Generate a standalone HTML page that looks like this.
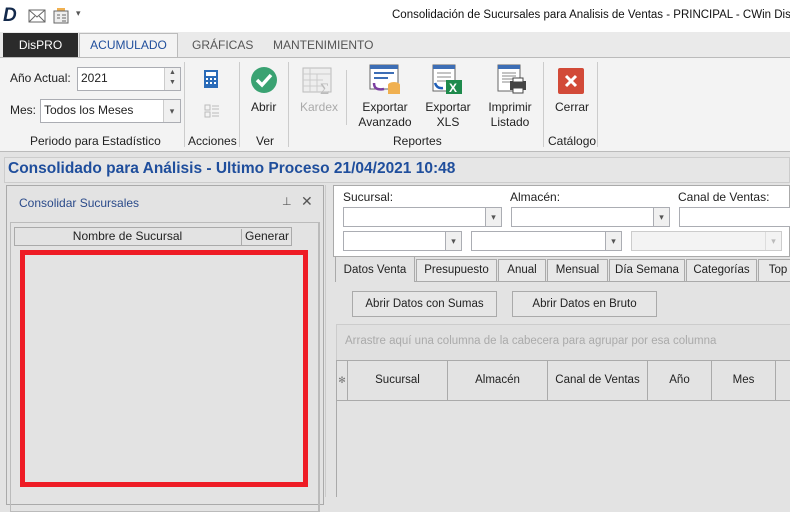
<!DOCTYPE html>
<html><head><meta charset="utf-8"><style>
*{box-sizing:border-box;margin:0;padding:0}
body{width:790px;height:497px;overflow:hidden;background:#e3e3e3;font-family:"Segoe UI","Liberation Sans",sans-serif;font-size:12px;color:#222;position:relative}
.a{position:absolute}
.t{white-space:nowrap}
.cb{position:absolute;background:#fff;border:1px solid #abadb3;height:20px}
.cb .ar{position:absolute;right:0;top:0;width:16px;height:18px;border-left:1px solid #abadb3;background:#f0f0f0;font-size:9px;text-align:center;line-height:18px;color:#555}
.tab{position:absolute;top:259px;height:23px;border:1px solid #aaa;background:#e8e8e8;text-align:center;line-height:21px;font-size:11.5px}
.btn{position:absolute;top:291px;height:26px;border:1px solid #aaa;background:#e6e6e6;text-align:center;line-height:24px;font-size:11.5px}
.gh{position:absolute;top:361px;height:39px;border-right:1px solid #aaa;text-align:center;line-height:38px;font-size:11.5px}
.rl{position:absolute;font-size:12px;text-align:center;color:#222;line-height:15px}
</style></head><body>
<div class="a" style="left:0;top:0;width:790px;height:32px;background:#fff"></div>
<div class="a t" style="left:3px;top:5px;font:bold italic 19px 'Liberation Sans',sans-serif;color:#13294b">D</div>
<svg class="a" style="left:28px;top:9px" width="18" height="14"><rect x="1" y="1" width="16" height="12" fill="#fff" stroke="#666"/><path d="M1 1L9 8L17 1M1 13L7 7M17 13L11 7" fill="none" stroke="#666"/></svg>
<svg class="a" style="left:52px;top:6px" width="18" height="18"><rect x="5" y="2" width="8" height="5" fill="#f0b050"/><rect x="2" y="5" width="14" height="12" fill="#eee" stroke="#666"/><path d="M5 9h3M5 12h3M10 9h4M10 12h4M10 15h4" stroke="#666"/></svg>
<div class="a t" style="left:76px;top:8px;font-size:9px;color:#555">▾</div>
<div class="a t" style="left:392px;top:9px;font-size:11.5px;color:#111">Consolidación de Sucursales para Analisis de Ventas - PRINCIPAL - CWin Dis</div>
<div class="a" style="left:0;top:32px;width:790px;height:25px;background:#eaeaea"></div>
<div class="a t" style="left:3px;top:33px;width:75px;height:24px;background:#2b2b2b;color:#fff;text-align:center;line-height:24px;font-size:12px">DisPRO</div>
<div class="a t" style="left:79px;top:33px;width:99px;height:25px;background:#f3f3f3;border:1px solid #bbb;border-bottom:none;color:#1f4e9c;text-align:center;line-height:23px;font-size:12px">ACUMULADO</div>
<div class="a t" style="left:192px;top:38px;color:#555">GRÁFICAS</div>
<div class="a t" style="left:273px;top:38px;color:#555">MANTENIMIENTO</div>
<div class="a" style="left:0;top:57px;width:790px;height:95px;background:#f3f3f3;border-top:1px solid #bbb;border-bottom:1px solid #bbb"></div>
<div class="a t" style="left:10px;top:71px">Año Actual:</div>
<div class="a" style="left:77px;top:67px;width:104px;height:24px;background:#fff;border:1px solid #abadb3"><span class="a" style="left:3px;top:3px">2021</span><div class="a" style="right:0;top:0;width:16px;height:22px;border-left:1px solid #ccc;background:#f0f0f0;font-size:7px;line-height:10px;text-align:center;color:#555">▲<br>▼</div></div>
<div class="a t" style="left:10px;top:103px">Mes:</div>
<div class="a" style="left:40px;top:99px;width:141px;height:24px;background:#fff;border:1px solid #abadb3"><span class="a" style="left:3px;top:3px">Todos los Meses</span><div class="a" style="right:0;top:0;width:17px;height:22px;border-left:1px solid #ccc;background:#f0f0f0;font-size:9px;line-height:22px;text-align:center;color:#555">▾</div></div>
<div class="a t" style="left:30px;top:134px">Periodo para Estadístico</div>
<div class="a" style="left:184px;top:62px;width:1px;height:85px;background:#ccc"></div>
<svg class="a" style="left:204px;top:70px" width="14" height="18"><rect x="0" y="0" width="14" height="18" fill="#2a6bb8"/><rect x="2" y="2" width="10" height="4" fill="#fff"/><path d="M2 8h2v2H2zM6 8h2v2H6zM10 8h2v2h-2zM2 12h2v2H2zM6 12h2v2H6zM10 12h2v2h-2z" fill="#fff"/></svg>
<svg class="a" style="left:204px;top:103px" width="16" height="16"><path d="M1 2h5v5H1zM1 9h5v5H1zM8 3h7M8 6h7M8 10h7M8 13h7" fill="none" stroke="#bbb"/></svg>
<div class="a t" style="left:188px;top:134px">Acciones</div>
<div class="a" style="left:239px;top:62px;width:1px;height:85px;background:#ccc"></div>
<svg class="a" style="left:250px;top:66px" width="28" height="28"><circle cx="14" cy="14" r="13" fill="#3aa272"/><path d="M7 14l5 5 9-10" fill="none" stroke="#fff" stroke-width="3.5"/></svg>
<div class="a t" style="left:251px;top:100px">Abrir</div>
<div class="a t" style="left:256px;top:134px">Ver</div>
<div class="a" style="left:288px;top:62px;width:1px;height:85px;background:#ccc"></div>
<svg class="a" style="left:302px;top:66px" width="32" height="30"><rect x="1" y="2" width="28" height="24" fill="#eee" stroke="#bbb"/><path d="M1 8h28M1 14h20M1 20h20M8 2v24M15 8v18" stroke="#ccc"/><text x="18" y="28" font-size="16" fill="#bbb" font-family="Liberation Serif">Σ</text></svg>
<div class="a t" style="left:300px;top:100px;color:#aaa">Kardex</div>
<div class="a" style="left:346px;top:70px;width:1px;height:55px;background:#ccc"></div>
<svg class="a" style="left:368px;top:63px" width="34" height="32"><rect x="2" y="2" width="28" height="24" fill="#fff" stroke="#666"/><rect x="2" y="2" width="28" height="4" fill="#3d6eb5"/><path d="M6 10h20M6 15h14" stroke="#3d6eb5" stroke-width="2"/><path d="M6 20q0 8 10 6" fill="none" stroke="#7b3fa0" stroke-width="2.5"/><ellipse cx="26" cy="22" rx="6" ry="3" fill="#f0b050"/><rect x="20" y="22" width="12" height="9" fill="#f0b050"/></svg>
<div class="rl t" style="left:350px;top:100px;width:70px">Exportar<br>Avanzado</div>
<svg class="a" style="left:431px;top:63px" width="34" height="32"><rect x="2" y="2" width="22" height="26" fill="#fff" stroke="#666"/><rect x="2" y="2" width="22" height="4" fill="#3d6eb5"/><path d="M6 10h14M6 14h14M6 18h10" stroke="#888"/><path d="M4 20q2 6 8 5" fill="none" stroke="#1f5fb8" stroke-width="2.5"/><rect x="15" y="17" width="16" height="14" fill="#1e8a4c"/><text x="18" y="29" font-size="12" font-weight="bold" fill="#fff" font-family="Liberation Sans">X</text></svg>
<div class="rl t" style="left:418px;top:100px;width:60px">Exportar<br>XLS</div>
<svg class="a" style="left:496px;top:63px" width="32" height="32"><rect x="2" y="2" width="22" height="26" fill="#fff" stroke="#666"/><rect x="2" y="2" width="22" height="4" fill="#3d6eb5"/><path d="M6 10h14M6 13h14M6 16h14M6 19h10" stroke="#888"/><rect x="14" y="18" width="16" height="9" fill="#444"/><rect x="17" y="15" width="10" height="4" fill="#fff" stroke="#444"/><rect x="17" y="25" width="10" height="5" fill="#fff" stroke="#444"/></svg>
<div class="rl t" style="left:480px;top:100px;width:60px">Imprimir<br>Listado</div>
<div class="a t" style="left:393px;top:134px">Reportes</div>
<div class="a" style="left:543px;top:62px;width:1px;height:85px;background:#ccc"></div>
<svg class="a" style="left:558px;top:68px" width="26" height="26"><rect width="26" height="26" rx="2" fill="#d24a38"/><path d="M8 8l10 10M18 8L8 18" stroke="#fff" stroke-width="3"/></svg>
<div class="a t" style="left:555px;top:100px">Cerrar</div>
<div class="a t" style="left:548px;top:134px">Catálogo</div>
<div class="a" style="left:597px;top:62px;width:1px;height:85px;background:#ccc"></div>
<div class="a" style="left:4px;top:157px;width:786px;height:26px;background:#e6e6e6;border:1px solid #ccc"></div>
<div class="a t" style="left:8px;top:160px;font-weight:bold;font-size:15.5px;color:#1f4e9c">Consolidado para Análisis - Ultimo Proceso 21/04/2021 10:48</div>
<div class="a" style="left:6px;top:185px;width:318px;height:320px;border:1px solid #aaa;background:#e3e3e3"></div>
<div class="a t" style="left:19px;top:196px;color:#2a4a8a">Consolidar Sucursales</div>
<div class="a t" style="left:282px;top:195px;color:#555;font-size:11px">⊥</div>
<div class="a t" style="left:301px;top:193px;color:#555;font-size:14px">✕</div>
<div class="a" style="left:10px;top:222px;width:310px;height:290px;border:1px solid #bbb;border-right:2px solid #bbb"></div>
<div class="a" style="left:14px;top:227px;width:278px;height:19px;border:1px solid #aaa;background:#e3e3e3"></div>
<div class="a t" style="left:14px;top:229px;width:228px;text-align:center;border-right:1px solid #aaa;height:16px">Nombre de Sucursal</div>
<div class="a t" style="left:245px;top:229px">Generar</div>
<div class="a" style="left:20px;top:250px;width:288px;height:237px;border:5px solid #ee1c25"></div>
<div class="a" style="left:333px;top:185px;width:457px;height:72px;background:#fff;border:1px solid #aaa"></div>
<div class="a t" style="left:343px;top:190px">Sucursal:</div>
<div class="a t" style="left:510px;top:190px">Almacén:</div>
<div class="a t" style="left:678px;top:190px">Canal de Ventas:</div>
<div class="cb" style="left:343px;top:207px;width:159px"><div class="ar">▾</div></div>
<div class="cb" style="left:511px;top:207px;width:159px"><div class="ar">▾</div></div>
<div class="cb" style="left:679px;top:207px;width:120px"></div>
<div class="cb" style="left:343px;top:231px;width:119px"><div class="ar">▾</div></div>
<div class="cb" style="left:471px;top:231px;width:151px"><div class="ar">▾</div></div>
<div class="cb" style="left:631px;top:231px;width:151px;background:#f3f3f3;border-color:#ccc"><div class="ar" style="background:#f3f3f3;border-color:#ddd;color:#bbb">▾</div></div>
<div class="a" style="left:335px;top:281px;width:460px;height:1px;background:#aaa"></div>
<div class="tab" style="left:335px;top:256px;width:80px;height:26px;background:#e3e3e3;border-bottom:none;line-height:26px">Datos Venta</div>
<div class="tab" style="left:416px;width:81px">Presupuesto</div>
<div class="tab" style="left:498px;width:48px">Anual</div>
<div class="tab" style="left:547px;width:61px">Mensual</div>
<div class="tab" style="left:609px;width:76px">Día Semana</div>
<div class="tab" style="left:686px;width:71px">Categorías</div>
<div class="tab" style="left:758px;width:40px">Top</div>
<div class="btn" style="left:352px;width:145px">Abrir Datos con Sumas</div>
<div class="btn" style="left:512px;width:145px">Abrir Datos en Bruto</div>
<div class="a" style="left:336px;top:324px;width:460px;height:37px;background:#e0e0e0;border:1px solid #ccc"></div>
<div class="a t" style="left:345px;top:335px;color:#aaa;font-size:11.5px">Arrastre aquí una columna de la cabecera para agrupar por esa columna</div>
<div class="a" style="left:336px;top:360px;width:460px;height:41px;border:1px solid #aaa;border-right:none;background:#e3e3e3"></div>
<div class="gh" style="left:337px;width:11px;font-size:9px;color:#777">✻</div>
<div class="gh" style="left:348px;width:100px">Sucursal</div>
<div class="gh" style="left:448px;width:100px">Almacén</div>
<div class="gh" style="left:548px;width:100px">Canal de Ventas</div>
<div class="gh" style="left:648px;width:64px">Año</div>
<div class="gh" style="left:712px;width:64px">Mes</div>
<div class="a" style="left:336px;top:400px;width:1px;height:97px;background:#aaa"></div>
<div class="a" style="left:325px;top:185px;width:1px;height:312px;background:#ccc"></div>
</body></html>
